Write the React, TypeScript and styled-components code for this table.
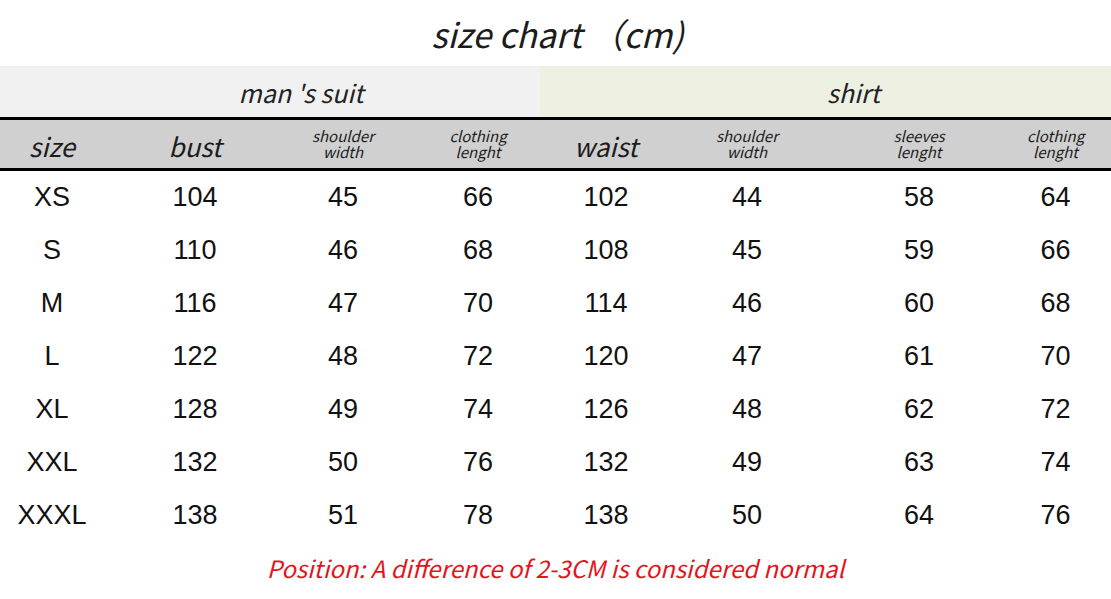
import React from 'react';
import styled, { createGlobalStyle } from 'styled-components';

const GlobalStyle = createGlobalStyle`
  html, body {
    margin: 0;
    padding: 0;
    background: #ffffff;
  }
`;

// column widths picked so the cell centres land where the chart has them
const columns = [104, 182, 114, 156, 100, 182, 162, 111];

const headers: string[][] = [
  ['size'],
  ['bust'],
  ['shoulder', 'width'],
  ['clothing', 'lenght'],
  ['waist'],
  ['shoulder', 'width'],
  ['sleeves', 'lenght'],
  ['clothing', 'lenght'],
];

const rows: (string | number)[][] = [
  ['XS', 104, 45, 66, 102, 44, 58, 64],
  ['S', 110, 46, 68, 108, 45, 59, 66],
  ['M', 116, 47, 70, 114, 46, 60, 68],
  ['L', 122, 48, 72, 120, 47, 61, 70],
  ['XL', 128, 49, 74, 126, 48, 62, 72],
  ['XXL', 132, 50, 76, 132, 49, 63, 74],
  ['XXXL', 138, 51, 78, 138, 50, 64, 76],
];

const App: React.FC = () => {
  return (
    <>
      <GlobalStyle />
      <Page>
        <Title>size chart （cm)</Title>
        <GroupRow>
          <GroupCell $bg="#f1f1f1" $width={540} $pad={62}>
            man 's suit
          </GroupCell>
          <GroupCell $bg="#eef0e1" $width={571} $pad={56}>
            shirt
          </GroupCell>
        </GroupRow>
        <HeaderRow>
          {headers.map((lines, i) =>
            lines.length === 1 ? (
              <HeadCell key={i}>{lines[0]}</HeadCell>
            ) : (
              <HeadCell key={i} $small>
                <span>{lines[0]}</span>
                <span>{lines[1]}</span>
              </HeadCell>
            )
          )}
        </HeaderRow>
        <Body>
          {rows.map((row) => (
            <DataRow key={row[0]}>
              {row.map((value, i) => (
                <DataCell key={i}>{value}</DataCell>
              ))}
            </DataRow>
          ))}
        </Body>
        <Note>Position: A difference of 2-3CM is considered normal</Note>
      </Page>
    </>
  );
};

const Page = styled.div`
  width: 1111px;
  height: 599px;
  overflow: hidden;
  background: #ffffff;
  display: flex;
  flex-direction: column;
  font-family: 'Noto Sans CJK SC', 'Noto Sans', sans-serif;
`;

const Title = styled.h1`
  margin: 0;
  height: 66px;
  display: flex;
  align-items: center;
  justify-content: center;
  padding-left: 4px;
  font-size: 34px;
  font-weight: 400;
  font-style: italic;
  color: #1c1c1c;
`;

const GroupRow = styled.div`
  display: flex;
  height: 51px;
`;

const GroupCell = styled.div<{ $bg: string; $width: number; $pad: number }>`
  width: ${(p) => p.$width}px;
  padding-left: ${(p) => p.$pad}px;
  box-sizing: border-box;
  background: ${(p) => p.$bg};
  display: flex;
  align-items: center;
  justify-content: center;
  font-size: 25px;
  font-style: italic;
  color: #222;
`;

const gridColumns = columns.map((w) => `${w}px`).join(' ');

const HeaderRow = styled.div`
  display: grid;
  grid-template-columns: ${gridColumns};
  height: 48px;
  background: #d0d0d0;
  border-top: 3px solid #000;
  border-bottom: 3px solid #000;
`;

const HeadCell = styled.div<{ $small?: boolean }>`
  display: flex;
  flex-direction: column;
  align-items: center;
  justify-content: center;
  text-align: center;
  font-style: italic;
  color: #1c1c1c;
  font-size: ${(p) => (p.$small ? '15px' : '26px')};
  line-height: ${(p) => (p.$small ? '16px' : '30px')};
  padding-top: ${(p) => (p.$small ? '0' : '4px')};
`;

const Body = styled.div`
  display: flex;
  flex-direction: column;
`;

const DataRow = styled.div`
  display: grid;
  grid-template-columns: ${gridColumns};
  height: 53px;
`;

const DataCell = styled.div`
  display: flex;
  align-items: center;
  justify-content: center;
  font-family: 'Comic Sans MS', 'Liberation Sans', sans-serif;
  font-size: 27px;
  color: #111;
`;

const Note = styled.p`
  margin: 0;
  height: 50px;
  display: flex;
  align-items: center;
  justify-content: center;
  font-size: 24px;
  font-style: italic;
  color: #e3141c;
`;

export default App;
